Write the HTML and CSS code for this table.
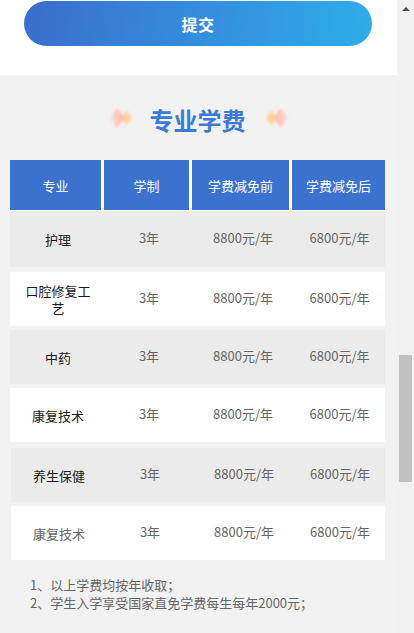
FILE: index.html
```html
<!DOCTYPE html>
<html lang="zh-CN">
<head>
<meta charset="utf-8">
<title>专业学费</title>
<link rel="stylesheet" href="styles.css">
</head>
<body>
<div class="page">
  <main class="content">
    <section class="form-panel">
      <button class="submit" type="button">提交</button>
    </section>

    <h2 class="title">
      <svg class="deco" width="26" height="22" viewBox="0 0 26 22" aria-hidden="true">
        <defs>
          <filter id="b1" x="-50%" y="-50%" width="200%" height="200%"><feGaussianBlur stdDeviation="1.5"/></filter>
          <linearGradient id="gp" x1="0" y1="0" x2="1" y2="0">
            <stop offset="0" stop-color="#fde6df"/>
            <stop offset="1" stop-color="#f8b19c"/>
          </linearGradient>
        </defs>
        <path d="M19.5 3.5 L25 11 L19.5 18.5 L14 11 Z" fill="#fcd39c" filter="url(#b1)"/>
        <path d="M10 1 L17.5 11 L10 21 L2.5 11 Z" fill="url(#gp)" filter="url(#b1)"/>
      </svg>
      <span class="title-text">专业学费</span>
      <svg class="deco flip" width="26" height="22" viewBox="0 0 26 22" aria-hidden="true">
        <path d="M19.5 3.5 L25 11 L19.5 18.5 L14 11 Z" fill="#fcd39c" filter="url(#b1)"/>
        <path d="M10 1 L17.5 11 L10 21 L2.5 11 Z" fill="url(#gp)" filter="url(#b1)"/>
      </svg>
    </h2>

    <div class="fee-table">
      <div class="thead">
        <div class="th">专业</div>
        <div class="th">学制</div>
        <div class="th">学费减免前</div>
        <div class="th">学费减免后</div>
      </div>
      <div class="tbody">
        <div class="tr gray first"><div class="td name">护理</div><div class="td">3年</div><div class="td">8800元/年</div><div class="td">6800元/年</div></div>
        <div class="tr"><div class="td name">口腔修复工艺</div><div class="td">3年</div><div class="td">8800元/年</div><div class="td">6800元/年</div></div>
        <div class="tr gray"><div class="td name">中药</div><div class="td">3年</div><div class="td">8800元/年</div><div class="td">6800元/年</div></div>
        <div class="tr wide-after"><div class="td name">康复技术</div><div class="td">3年</div><div class="td">8800元/年</div><div class="td">6800元/年</div></div>
        <div class="tr gray shift"><div class="td name">养生保健</div><div class="td">3年</div><div class="td">8800元/年</div><div class="td">6800元/年</div></div>
        <div class="tr shift"><div class="td name muted">康复技术</div><div class="td">3年</div><div class="td">8800元/年</div><div class="td">6800元/年</div></div>
      </div>
    </div>

    <div class="notes">
      <p>1、以上学费均按年收取；</p>
      <p>2、学生入学享受国家直免学费每生每年2000元；</p>
    </div>
  </main>

  <aside class="scrollbar" aria-hidden="true">
    <div class="arrow-up"></div>
    <div class="thumb"></div>
  </aside>
</div>
</body>
</html>
```

FILE: styles.css
```css
* { box-sizing: border-box; }

html, body {
  margin: 0;
  padding: 0;
  height: 633px;
  overflow: hidden;
  background: #f2f2f2;
  font-family: "Noto Sans CJK SC", "Noto Sans", sans-serif;
}

.page {
  display: flex;
  width: 414px;
  height: 633px;
}

.content {
  width: 397px;
  flex: none;
}

.form-panel {
  background: #fff;
  height: 75px;
  padding: 1px 25px 0 24px;
}

.submit {
  display: block;
  width: 348px;
  height: 45px;
  border: none;
  border-radius: 23px;
  background: linear-gradient(100deg, #3a6dcc 0%, #3490de 55%, #2eaee8 100%);
  color: #fff;
  font-family: inherit;
  font-size: 16px;
  font-weight: 700;
  letter-spacing: 0.5px;
  padding: 0;
}

.title {
  margin: 0;
  height: 85px;
  padding-top: 32px;
  display: flex;
  justify-content: center;
  align-items: flex-start;
  gap: 19px;
}

.title-text {
  font-size: 24px;
  line-height: 24px;
  font-weight: 700;
  color: #3a7bd5;
  padding-top: 1px;
  margin-left: -2px;
}

.deco {
  display: block;
}

.deco.flip { transform: scaleX(-1); }

.fee-table {
  margin-left: 10px;
  width: 375px;
}

.thead {
  display: grid;
  grid-template-columns: 91px 85px 97px 93px;
  column-gap: 3px;
  height: 51px;
  background: #fff;
  padding-bottom: 1px;
}

.th {
  background: #3b72d0;
  color: #fff;
  font-size: 13px;
  display: flex;
  align-items: center;
  justify-content: center;
  text-align: center;
}

.tbody {
  display: flex;
  flex-direction: column;
  gap: 4px;
}

.tr {
  display: grid;
  grid-template-columns: 96px 86px 102px 1fr;
  height: 54px;
  background: #fff;
  font-size: 13px;
  color: #666;
}

.tr.gray { background: #ebebeb; }
.tr.first { height: 56px; margin-bottom: 1px; }
.tr.wide-after { margin-bottom: 2px; }
.tr.shift { margin-left: 1px; }

.td {
  display: flex;
  align-items: center;
  justify-content: center;
  text-align: center;
  line-height: 17px;
  padding-bottom: 3px;
}

.td.name {
  color: #1a1a1a;
  padding: 0 14px;
}

.td.name.muted { color: #666; }

.notes {
  padding: 16px 0 0 30px;
  font-size: 13px;
  line-height: 18px;
  color: #666;
}

.notes p { margin: 0; }

.scrollbar {
  width: 17px;
  flex: none;
  background: #f1f1f1;
  display: flex;
  flex-direction: column;
  align-items: center;
}

.arrow-up {
  margin-top: 7px;
  width: 0;
  height: 0;
  border-left: 4px solid transparent;
  border-right: 4px solid transparent;
  border-bottom: 4px solid #505050;
}

.thumb {
  margin-top: 344px;
  width: 13px;
  height: 127px;
  background: #c1c1c1;
}
```
